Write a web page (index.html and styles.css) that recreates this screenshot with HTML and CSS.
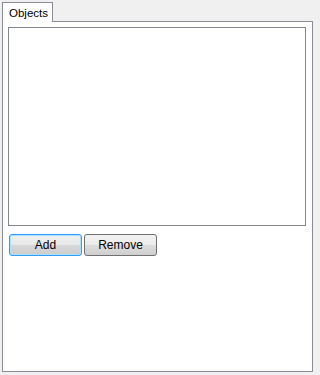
FILE: index.html
```html
<!DOCTYPE html>
<html>
<head>
<meta charset="utf-8">
<link rel="stylesheet" href="styles.css">
</head>
<body>
<div class="tabs">
  <div class="tab">Objects</div>
</div>
<div class="panel">
  <div class="listbox"></div>
  <div class="buttons">
    <button class="btn btn-default">Add</button>
    <button class="btn">Remove</button>
  </div>
</div>
</body>
</html>
```
FILE: styles.css
```css
html, body {
  margin: 0;
  padding: 0;
}
body {
  background: #f0f0f0;
  width: 315px;
  height: 375px;
  padding: 2px 0 0 2px;
  box-sizing: border-box;
  font-family: "Liberation Sans", Arial, sans-serif;
  font-size: 11px;
  color: #000;
}
.tabs {
  display: flex;
  height: 19px;
}
.tab {
  width: 51px;
  height: 20px;
  box-sizing: border-box;
  background: #fff;
  border: 1px solid #898c95;
  border-bottom: none;
  padding: 3px 0 0 6px;
  position: relative;
  z-index: 1;
  font-size: 11.5px;
  line-height: 14px;
}
.panel {
  width: 311px;
  height: 351px;
  box-sizing: border-box;
  background: #fff;
  border: 1px solid #898c95;
  padding: 5px 0 0 5px;
}
.listbox {
  width: 298px;
  height: 199px;
  box-sizing: border-box;
  border: 1px solid #828790;
  background: #fff;
}
.buttons {
  display: flex;
  gap: 2px;
  margin: 8px 0 0 1px;
}
.btn {
  width: 73px;
  height: 22px;
  box-sizing: border-box;
  border: 1px solid #707070;
  border-radius: 3px;
  background: linear-gradient(#f2f2f2 0%, #ebebeb 50%, #dddddd 50%, #cfcfcf 100%);
  font-family: "Liberation Sans", Arial, sans-serif;
  font-size: 12px;
  color: #000;
  padding: 0;
  margin: 0;
}
.btn-default {
  border-color: #3399ff;
  box-shadow: inset 0 0 0 1px #a8e2ff;
  background: linear-gradient(#f0f0f0 0%, #e8e8e8 50%, #d8d8d8 50%, #cdcdcd 100%);
}
```
